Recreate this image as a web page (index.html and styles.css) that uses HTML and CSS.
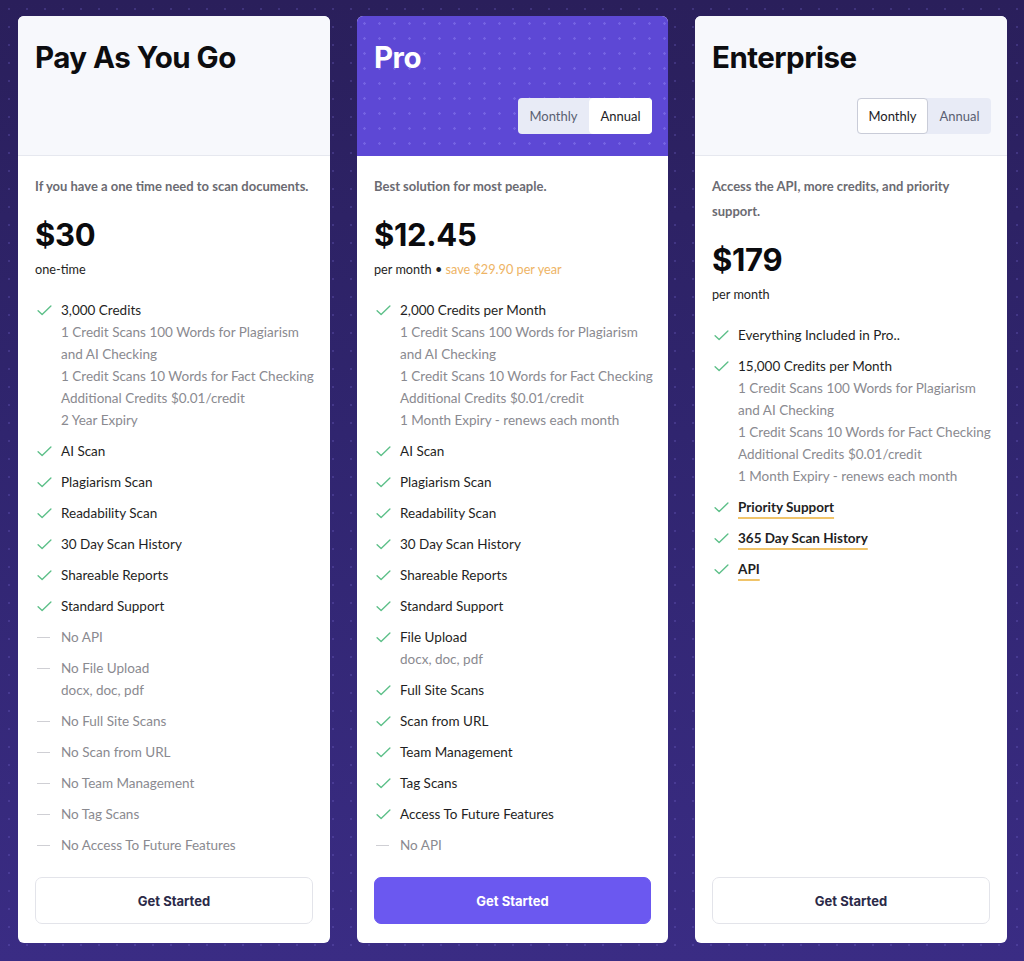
FILE: index.html
```html
<!DOCTYPE html>
<html lang="en">
<head>
<meta charset="utf-8">
<title>Pricing</title>
<link rel="stylesheet" href="styles.css">
</head>
<body>
<main class="page">
  <section class="card">
    <header class="card-head">
      <h2 class="plan-name">Pay As You Go</h2>
    </header>
    <div class="card-body">
      <p class="desc">If you have a one time need to scan documents.</p>
      <div class="price">$30</div>
      <div class="period">one-time</div>
      <ul class="features">
        <li class="yes"><span class="ic"><svg viewBox="0 0 16 12"><path d="M1 6.2 L5.4 10.4 L15 1.2"/></svg></span><div><div class="main">3,000 Credits</div><div class="sub">1 Credit Scans 100 Words for Plagiarism and AI Checking</div><div class="sub">1 Credit Scans 10 Words for Fact Checking</div><div class="sub">Additional Credits $0.01/credit</div><div class="sub">2 Year Expiry</div></div></li>
        <li class="yes"><span class="ic"><svg viewBox="0 0 16 12"><path d="M1 6.2 L5.4 10.4 L15 1.2"/></svg></span><div class="main">AI Scan</div></li>
        <li class="yes"><span class="ic"><svg viewBox="0 0 16 12"><path d="M1 6.2 L5.4 10.4 L15 1.2"/></svg></span><div class="main">Plagiarism Scan</div></li>
        <li class="yes"><span class="ic"><svg viewBox="0 0 16 12"><path d="M1 6.2 L5.4 10.4 L15 1.2"/></svg></span><div class="main">Readability Scan</div></li>
        <li class="yes"><span class="ic"><svg viewBox="0 0 16 12"><path d="M1 6.2 L5.4 10.4 L15 1.2"/></svg></span><div class="main">30 Day Scan History</div></li>
        <li class="yes"><span class="ic"><svg viewBox="0 0 16 12"><path d="M1 6.2 L5.4 10.4 L15 1.2"/></svg></span><div class="main">Shareable Reports</div></li>
        <li class="yes"><span class="ic"><svg viewBox="0 0 16 12"><path d="M1 6.2 L5.4 10.4 L15 1.2"/></svg></span><div class="main">Standard Support</div></li>
        <li class="no"><span class="ic"><span class="dash"></span></span><div class="main">No API</div></li>
        <li class="no"><span class="ic"><span class="dash"></span></span><div><div class="main">No File Upload</div><div class="sub">docx, doc, pdf</div></div></li>
        <li class="no"><span class="ic"><span class="dash"></span></span><div class="main">No Full Site Scans</div></li>
        <li class="no"><span class="ic"><span class="dash"></span></span><div class="main">No Scan from URL</div></li>
        <li class="no"><span class="ic"><span class="dash"></span></span><div class="main">No Team Management</div></li>
        <li class="no"><span class="ic"><span class="dash"></span></span><div class="main">No Tag Scans</div></li>
        <li class="no"><span class="ic"><span class="dash"></span></span><div class="main">No Access To Future Features</div></li>
      </ul>
      <a class="btn" href="#">Get Started</a>
    </div>
  </section>

  <section class="card">
    <header class="card-head pro">
      <h2 class="plan-name">Pro</h2>
      <div class="toggle">
        <span class="seg">Monthly</span><span class="seg active">Annual</span>
      </div>
    </header>
    <div class="card-body">
      <p class="desc">Best solution for most peaple.</p>
      <div class="price">$12.45</div>
      <div class="period">per month &bull; <span class="save">save $29.90 per year</span></div>
      <ul class="features">
        <li class="yes"><span class="ic"><svg viewBox="0 0 16 12"><path d="M1 6.2 L5.4 10.4 L15 1.2"/></svg></span><div><div class="main">2,000 Credits per Month</div><div class="sub">1 Credit Scans 100 Words for Plagiarism and AI Checking</div><div class="sub">1 Credit Scans 10 Words for Fact Checking</div><div class="sub">Additional Credits $0.01/credit</div><div class="sub">1 Month Expiry - renews each month</div></div></li>
        <li class="yes"><span class="ic"><svg viewBox="0 0 16 12"><path d="M1 6.2 L5.4 10.4 L15 1.2"/></svg></span><div class="main">AI Scan</div></li>
        <li class="yes"><span class="ic"><svg viewBox="0 0 16 12"><path d="M1 6.2 L5.4 10.4 L15 1.2"/></svg></span><div class="main">Plagiarism Scan</div></li>
        <li class="yes"><span class="ic"><svg viewBox="0 0 16 12"><path d="M1 6.2 L5.4 10.4 L15 1.2"/></svg></span><div class="main">Readability Scan</div></li>
        <li class="yes"><span class="ic"><svg viewBox="0 0 16 12"><path d="M1 6.2 L5.4 10.4 L15 1.2"/></svg></span><div class="main">30 Day Scan History</div></li>
        <li class="yes"><span class="ic"><svg viewBox="0 0 16 12"><path d="M1 6.2 L5.4 10.4 L15 1.2"/></svg></span><div class="main">Shareable Reports</div></li>
        <li class="yes"><span class="ic"><svg viewBox="0 0 16 12"><path d="M1 6.2 L5.4 10.4 L15 1.2"/></svg></span><div class="main">Standard Support</div></li>
        <li class="yes"><span class="ic"><svg viewBox="0 0 16 12"><path d="M1 6.2 L5.4 10.4 L15 1.2"/></svg></span><div><div class="main">File Upload</div><div class="sub">docx, doc, pdf</div></div></li>
        <li class="yes"><span class="ic"><svg viewBox="0 0 16 12"><path d="M1 6.2 L5.4 10.4 L15 1.2"/></svg></span><div class="main">Full Site Scans</div></li>
        <li class="yes"><span class="ic"><svg viewBox="0 0 16 12"><path d="M1 6.2 L5.4 10.4 L15 1.2"/></svg></span><div class="main">Scan from URL</div></li>
        <li class="yes"><span class="ic"><svg viewBox="0 0 16 12"><path d="M1 6.2 L5.4 10.4 L15 1.2"/></svg></span><div class="main">Team Management</div></li>
        <li class="yes"><span class="ic"><svg viewBox="0 0 16 12"><path d="M1 6.2 L5.4 10.4 L15 1.2"/></svg></span><div class="main">Tag Scans</div></li>
        <li class="yes"><span class="ic"><svg viewBox="0 0 16 12"><path d="M1 6.2 L5.4 10.4 L15 1.2"/></svg></span><div class="main">Access To Future Features</div></li>
        <li class="no"><span class="ic"><span class="dash"></span></span><div class="main">No API</div></li>
      </ul>
      <a class="btn primary" href="#">Get Started</a>
    </div>
  </section>

  <section class="card">
    <header class="card-head">
      <h2 class="plan-name">Enterprise</h2>
      <div class="toggle light">
        <span class="seg active">Monthly</span><span class="seg">Annual</span>
      </div>
    </header>
    <div class="card-body">
      <p class="desc">Access the API, more credits, and priority support.</p>
      <div class="price">$179</div>
      <div class="period">per month</div>
      <ul class="features">
        <li class="yes"><span class="ic"><svg viewBox="0 0 16 12"><path d="M1 6.2 L5.4 10.4 L15 1.2"/></svg></span><div class="main">Everything Included in Pro..</div></li>
        <li class="yes"><span class="ic"><svg viewBox="0 0 16 12"><path d="M1 6.2 L5.4 10.4 L15 1.2"/></svg></span><div><div class="main">15,000 Credits per Month</div><div class="sub">1 Credit Scans 100 Words for Plagiarism and AI Checking</div><div class="sub">1 Credit Scans 10 Words for Fact Checking</div><div class="sub">Additional Credits $0.01/credit</div><div class="sub">1 Month Expiry - renews each month</div></div></li>
        <li class="yes"><span class="ic"><svg viewBox="0 0 16 12"><path d="M1 6.2 L5.4 10.4 L15 1.2"/></svg></span><div class="main"><span class="hl">Priority Support</span></div></li>
        <li class="yes"><span class="ic"><svg viewBox="0 0 16 12"><path d="M1 6.2 L5.4 10.4 L15 1.2"/></svg></span><div class="main"><span class="hl">365 Day Scan History</span></div></li>
        <li class="yes"><span class="ic"><svg viewBox="0 0 16 12"><path d="M1 6.2 L5.4 10.4 L15 1.2"/></svg></span><div class="main"><span class="hl">API</span></div></li>
      </ul>
      <a class="btn" href="#">Get Started</a>
    </div>
  </section>
</main>
</body>
</html>
```

FILE: styles.css
```css
* { box-sizing: border-box; }

html, body {
  margin: 0;
  height: 100%;
}

body {
  font-family: Lato, "Noto Sans", sans-serif;
  color: #1f1f24;
  background-color: #2f2470;
  background-image:
    radial-gradient(circle, rgba(120, 105, 210, 0.28) 1px, transparent 1.4px),
    linear-gradient(180deg, #2a1f5b 0%, #30256f 45%, #3a2c84 100%);
  background-size: 18px 18px, 100% 100%;
}

.page {
  height: 961px;
  padding: 16px 17px 18px 18px;
  display: grid;
  grid-template-columns: 312px 311px 312px;
  column-gap: 27px;
}

.card {
  background: #fff;
  border-radius: 6px;
  overflow: hidden;
  display: flex;
  flex-direction: column;
}

.card-head {
  height: 140px;
  flex: none;
  background: #f7f8fc;
  border-bottom: 1px solid #e6e8ef;
  padding: 23px 16px 21px 17px;
  display: flex;
  flex-direction: column;
}

.card-head.pro {
  background-color: #5d48d5;
  background-image: radial-gradient(circle, rgba(140, 125, 240, 0.5) 1px, transparent 1.5px);
  background-size: 15px 15px;
  border-bottom-color: #5d48d5;
}

.plan-name {
  margin: 0;
  font-family: Inter, "Noto Sans", sans-serif;
  font-size: 29.5px;
  line-height: 36px;
  font-weight: 700;
  letter-spacing: -0.5px;
  color: #0d0d10;
}

.pro .plan-name { color: #fff; }

.toggle {
  margin-top: auto;
  align-self: flex-end;
  display: flex;
  height: 36px;
  border-radius: 4px;
  background: #e8ebf6;
  font-size: 13px;
}

.seg {
  display: flex;
  align-items: center;
  padding: 0 12px;
  color: #5a5f72;
  border-radius: 4px;
}

.toggle .seg:first-child { width: 71px; justify-content: center; }
.toggle .seg:last-child { width: 63px; justify-content: center; }

.seg.active {
  background: #fff;
  color: #1c1c26;
  border: 1px solid #c9ccd8;
}

.pro .seg.active { border-color: #fff; }

.card-body {
  flex: 1;
  display: flex;
  flex-direction: column;
  padding: 18px 17px 19px 17px;
}

.desc {
  margin: 0;
  font-size: 13px;
  line-height: 25px;
  font-weight: 700;
  color: #6b6b72;
}

.price {
  margin-top: 16px;
  font-family: Inter, "Noto Sans", sans-serif;
  font-size: 31px;
  line-height: 40px;
  font-weight: 700;
  letter-spacing: -0.3px;
  color: #0b0b0e;
}

.period {
  margin-top: 5px;
  font-size: 12.7px;
  line-height: 18px;
  color: #1f1f24;
}

.save { color: #eeb465; }

.features {
  list-style: none;
  margin: 21px -6px 0 0;
  padding: 0;
  display: flex;
  flex-direction: column;
  gap: 9px;
}

.features li {
  display: flex;
  align-items: flex-start;
}

.ic {
  flex: none;
  width: 26px;
  height: 22px;
  display: flex;
  align-items: center;
  padding-left: 2px;
}

.ic svg {
  width: 15px;
  height: 11px;
  fill: none;
  stroke: #5cbf88;
  stroke-width: 1.5;
  stroke-linecap: round;
  stroke-linejoin: round;
}

.dash {
  display: block;
  width: 13px;
  height: 1px;
  background: #cfcfd4;
}

.main {
  font-size: 13.5px;
  line-height: 22px;
  color: #1f1f24;
}

.no .main { color: #8a8a90; }

.sub {
  font-size: 13.5px;
  line-height: 22px;
  color: #8a8a90;
}

.hl {
  font-weight: 700;
  text-decoration: underline;
  text-decoration-color: #f0c46a;
  text-decoration-thickness: 2px;
  text-underline-offset: 5px;
}

.btn {
  margin-top: auto;
  height: 47px;
  display: flex;
  align-items: center;
  justify-content: center;
  border: 1px solid #e3e4ea;
  border-radius: 7px;
  font-family: Inter, "Noto Sans", sans-serif;
  font-size: 13px;
  font-weight: 700;
  color: #2b2a48;
  text-decoration: none;
  background: #fff;
}

.btn.primary {
  background: #6b58f0;
  border-color: #6b58f0;
  color: #fff;
}
```
